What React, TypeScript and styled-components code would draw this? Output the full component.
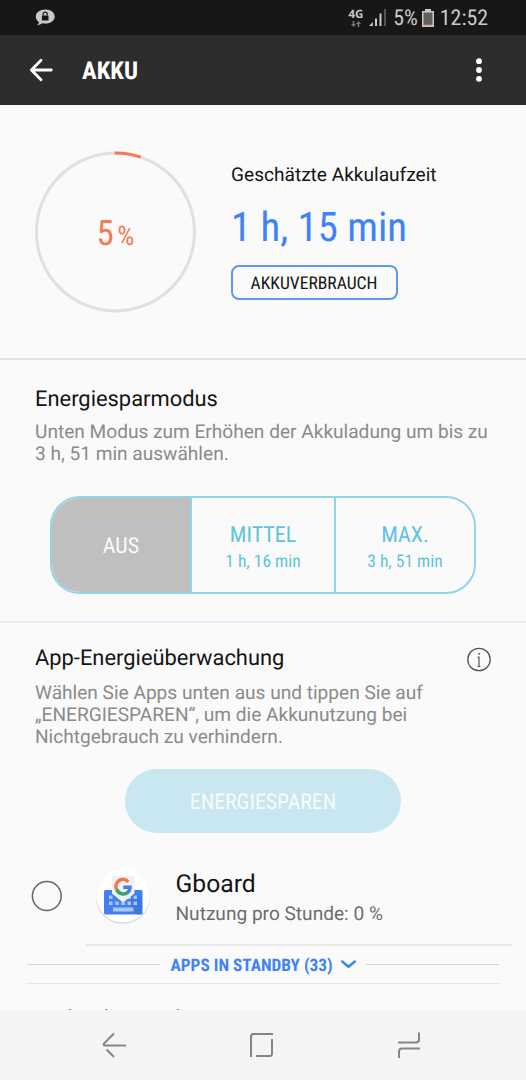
import React from "react";
import styled, { createGlobalStyle } from "styled-components";

const GlobalStyle = createGlobalStyle`
  *, *::before, *::after { box-sizing: border-box; }
  body { margin: 0; background: #fafafa; }
`;

const condensed = `
  font-family: "Roboto Condensed", Roboto, "Liberation Sans", sans-serif;
  font-stretch: 75%;
  text-rendering: geometricPrecision;
`;

const Screen = styled.div`
  width: 526px;
  height: 1080px;
  display: flex;
  flex-direction: column;
  overflow: hidden;
  background: #fafafa;
  color: #151515;
  font-family: Roboto, "Liberation Sans", sans-serif;
  text-rendering: geometricPrecision;
  white-space: nowrap;
`;

const StatusBar = styled.div`
  height: 35px;
  flex: none;
  display: flex;
  align-items: center;
  padding: 0 38px 0 35px;
  background: #171717;
  color: #c9c9c9;
`;

const StatusIcons = styled.div`
  margin-left: auto;
  display: flex;
  align-items: center;
`;

const StatusText = styled.span<{ $left: number }>`
  ${condensed}
  font-size: 21.8px;
  line-height: 35px;
  padding-top: 1px;
  margin-left: ${(p) => p.$left}px;
`;

const Network = styled.div`
  display: flex;
  flex-direction: column;
  align-items: center;
  gap: 1px;
  margin: 0 6px 0 0;
  font: 700 11.5px/11px "Open Sans", "Noto Sans", sans-serif;
`;

const BatterySlot = styled.span`
  display: flex;
  margin-left: 4px;
`;

const TitleBar = styled.header`
  height: 70px;
  flex: none;
  display: flex;
  align-items: center;
  padding: 0 43px 0 29px;
  background: #2d2d2d;
  color: #fff;
`;

const Title = styled.h1`
  ${condensed}
  margin: 4px auto 0 28px;
  font-size: 24.6px;
  line-height: 30px;
  font-weight: 700;
`;

const Content = styled.main`
  height: 905px;
  flex: none;
  overflow: hidden;
`;

const Summary = styled.section`
  height: 255px;
  display: flex;
  padding: 46px 0 0 34px;
  border-bottom: 2px solid #e2e2e2;
`;

const Gauge = styled.div`
  display: grid;
  width: 163px;
  height: 163px;
  > * { grid-area: 1 / 1; }
`;

const GaugeValue = styled.div`
  ${condensed}
  display: flex;
  align-items: baseline;
  padding: 62px 0 0 62.5px;
  gap: 3.5px;
  color: #f47a4f;
  font-size: 35px;
  line-height: 42px;
`;

const GaugeUnit = styled.span`
  font-size: 27px;
`;

const Estimate = styled.div`
  display: flex;
  flex-direction: column;
  align-items: flex-start;
  padding: 11px 0 0 34px;
`;

const EstimateLabel = styled.div`
  font-size: 19.1px;
  line-height: 25px;
`;

const EstimateTime = styled.div`
  ${condensed}
  margin-top: 15px;
  font-size: 40.8px;
  line-height: 50px;
  color: #4083f4;
`;

const UsageButton = styled.button`
  ${condensed}
  width: 167px;
  height: 35px;
  margin-top: 13px;
  padding: 2px 1px 0 0;
  border: 2px solid #5f97f5;
  border-radius: 8px;
  background: none;
  color: #151515;
  font-size: 17.6px;
`;

const ModeSection = styled.section`
  height: 263px;
  padding: 26px 35px 0;
  border-bottom: 2px solid #ebebeb;
`;

const Heading = styled.h2`
  margin: 0;
  font-size: 21.9px;
  line-height: 28px;
  font-weight: 400;
`;

const Description = styled.p<{ $top: number }>`
  margin: ${(p) => p.$top}px 0 0;
  font-size: 19.1px;
  line-height: 22px;
  color: #8b8b8b;
`;

const Segments = styled.div`
  display: flex;
  width: 426px;
  height: 98px;
  margin: 31px 0 0 15px;
  border: 2px solid #92d4e8;
  border-radius: 30px;
  overflow: hidden;
`;

const Segment = styled.button<{ $width: number; $active?: boolean }>`
  ${condensed}
  width: ${(p) => p.$width}px;
  flex: none;
  display: flex;
  flex-direction: column;
  align-items: center;
  justify-content: center;
  padding: ${(p) => (p.$active ? 4 : 6)}px 0 0;
  border: 0;
  background: ${(p) => (p.$active ? "#bfbfbf" : "transparent")};
  color: ${(p) => (p.$active ? "#fafafa" : "#5fc3e0")};
  & + & { border-left: 2px solid #92d4e8; }
`;

const SegmentName = styled.span`
  font-size: 22px;
  line-height: 28px;
`;

const SegmentTime = styled.span`
  font-size: 17.5px;
  line-height: 25px;
`;

const MonitorSection = styled.section`
  padding: 21px 35px 0;
`;

const HeadingRow = styled.div`
  display: flex;
  justify-content: space-between;
  height: 29px;
  > h2 { padding-top: 1px; }
`;

const SaveButton = styled.button`
  ${condensed}
  display: block;
  width: 276px;
  height: 64px;
  margin: 21px auto 0;
  padding: 2px 0 0;
  border: 0;
  border-radius: 32px;
  background: #c9e7f0;
  color: #fafafa;
  font-size: 21.8px;
`;

const AppRow = styled.div`
  display: flex;
  height: 111px;
  margin-left: 31px;
  padding-top: 31px;
`;

const IconSlot = styled.div`
  padding: 4px 0 0 32px;
`;

const AppText = styled.div`
  padding: 6px 0 0 24.5px;
`;

const AppName = styled.div`
  font-size: 24.7px;
  line-height: 29px;
`;

const AppUsage = styled.div`
  margin-top: 2px;
  font-size: 19.1px;
  line-height: 26px;
  color: #6d6d6d;
`;

const Rule = styled.div<{ $left: number; $right: number; $thick: number }>`
  height: ${(p) => p.$thick}px;
  margin: 0 ${(p) => p.$right}px 0 ${(p) => p.$left}px;
  background: #e8e8e8;
`;

const StandbyRow = styled.div`
  ${condensed}
  display: flex;
  align-items: center;
  height: 37px;
  padding: 0 27px;
  color: #4083f4;
  font-size: 17.3px;
  font-weight: 700;
`;

const StandbyLine = styled.span`
  flex: 1;
  height: 1px;
  background: #d6d6d6;
`;

const StandbyLabel = styled.span`
  display: flex;
  align-items: center;
  gap: 8px;
  padding: 0 10px;
`;

const StandbyText = styled.span`
  padding-top: 2px;
`;

const NextHeading = styled(Heading)`
  padding: 22px 0 0 35px;
`;

const NavBar = styled.nav`
  height: 70px;
  flex: none;
  display: flex;
  align-items: center;
  justify-content: space-between;
  padding: 0 104px 0 99px;
  background: #f4f4f4;
`;

const ChatLockIcon = () => (
  <svg width="20" height="17" viewBox="0 0 20 17">
    <path d="M10.4.5C5 .5.8 3.400.8 7.400c0 2.300 1.200 4.300 3.200 5.500-.2 1.300-1 2.300-1.900 3.200 2 0 3.700-.7 5-1.800 1 .2 2.100.3 3.300.3 5.200 0 9.300-2.900 9.300-7.100S15.600.5 10.400.5z" fill="#c9c9c9" />
    <rect x="6.900" y="6.500" width="6.600" height="5" rx=".5" fill="#171717" />
    <path d="M8.200 6.500V5.100a2 2 0 0 1 4 0v1.400" fill="none" stroke="#171717" strokeWidth="1.200" />
  </svg>
);

const SignalIcon = () => (
  <svg width="17" height="17" viewBox="0 0 17 17">
    <path d="M0 17L3.800 13V17z" fill="#c9c9c9" />
    <path d="M7 17V9.500M11.500 17V4.500" stroke="#c9c9c9" strokeWidth="2" />
    <path d="M16 17V0" stroke="#555" strokeWidth="2" />
  </svg>
);

const BatteryIcon = () => (
  <svg width="12" height="18" viewBox="0 0 12 18">
    <path d="M3 0h6v2h3v16H0V2h3z" fill="#c9c9c9" />
    <path d="M1.500 3.500h9v12.500h-9z" fill="#606060" />
    <path d="M1.500 15.500h9v1h-9z" fill="#b98b80" />
  </svg>
);

const GboardIcon = () => (
  <svg width="56" height="57" viewBox="0 0 56 57">
    <circle cx="28" cy="28.500" r="27.200" fill="#d5d5d5" />
    <circle cx="28" cy="27.500" r="27" fill="#fff" />
    <rect x="9" y="22" width="38.500" height="24.500" rx="1.500" fill="#4380ed" />
    <path d="M35.500 40l6.500 6.500H47V32L37 22z" fill="#346fd4" opacity=".5" />
    <path
      d="M14 27.500h3.500V31H14zM32.500 27.500H36V31h-3.500zM38.500 27.500H42V31h-3.500zM14 33.500h3.500V37H14zM20.200 33.500h3.500V37h-3.500zM26.400 33.500h3.500V37h-3.500zM32.500 33.500H36V37h-3.500zM38.500 33.500H42V37h-3.500zM18 39.500h20.500v4H18z"
      fill="#a9c5fa"
    />
    <path d="M18.500 8h19a2 2 0 0 1 2 2v15.500l-11.500 9-11-9V10q0-2 1.500-2z" fill="#f1f1f1" />
    <g fill="none" strokeWidth="3.500">
      <path d="M33.300 14A7 7 0 0 0 21.600 21.500" stroke="#f17550" />
      <path d="M21.800 21.500A7 7 0 0 0 33 24.200" stroke="#36a568" />
      <path d="M28.300 19.200H35A7 7 0 0 1 32.300 24.700" stroke="#4380ed" />
    </g>
  </svg>
);

export default function App() {
  return (
    <Screen>
      <GlobalStyle />
      <StatusBar>
        <ChatLockIcon />
        <StatusIcons>
          <Network>
            4G
            <svg width="10" height="6" viewBox="0 0 10 6">
              <path d="M2.500 0v3M7.500 6V3" stroke="#777" strokeWidth="1.600" />
              <path d="M0 3h5L2.500 6zM5 3h5L7.500 0z" fill="#777" />
            </svg>
          </Network>
          <SignalIcon />
          <StatusText $left={7}>5%</StatusText>
          <BatterySlot>
            <BatteryIcon />
          </BatterySlot>
          <StatusText $left={6}>12:52</StatusText>
        </StatusIcons>
      </StatusBar>
      <TitleBar>
        <svg width="25" height="24" viewBox="0 0 25 24" fill="none" stroke="#fff" strokeWidth="2.800" strokeLinecap="round" strokeLinejoin="round">
          <path d="M12 2.300L2.400 12l9.600 9.700M3 12h19.300" />
        </svg>
        <Title>AKKU</Title>
        <svg width="8" height="26" viewBox="0 0 8 26" fill="#fff">
          <circle cx="4" cy="4.200" r="2.900" />
          <circle cx="4" cy="13" r="2.900" />
          <circle cx="4" cy="21.800" r="2.900" />
        </svg>
      </TitleBar>
      <Content>
        <Summary>
          <Gauge>
            <svg width="163" height="163" viewBox="0 0 163 163" fill="none" strokeWidth="3">
              <circle cx="81.500" cy="81" r="79" stroke="#e0e0e0" />
              <path d="M80.500 2A79 79 0 0 1 106.800 6.200" stroke="#f47a4f" />
            </svg>
            <GaugeValue>
              5<GaugeUnit>%</GaugeUnit>
            </GaugeValue>
          </Gauge>
          <Estimate>
            <EstimateLabel>Geschätzte Akkulaufzeit</EstimateLabel>
            <EstimateTime>1 h, 15 min</EstimateTime>
            <UsageButton>AKKUVERBRAUCH</UsageButton>
          </Estimate>
        </Summary>
        <ModeSection>
          <Heading>Energiesparmodus</Heading>
          <Description $top={7}>
            Unten Modus zum Erhöhen der Akkuladung um bis zu
            <br />3 h, 51 min auswählen.
          </Description>
          <Segments>
            <Segment $width={138} $active>
              <SegmentName>AUS</SegmentName>
            </Segment>
            <Segment $width={144}>
              <SegmentName>MITTEL</SegmentName>
              <SegmentTime>1 h, 16 min</SegmentTime>
            </Segment>
            <Segment $width={140}>
              <SegmentName>MAX.</SegmentName>
              <SegmentTime>3 h, 51 min</SegmentTime>
            </Segment>
          </Segments>
        </ModeSection>
        <MonitorSection>
          <HeadingRow>
            <Heading>App-Energieüberwachung</Heading>
            <svg width="24" height="31" viewBox="0 0 24 31" fill="none" stroke="#555" strokeWidth="1.300">
              <circle cx="12" cy="15.500" r="11.200" />
              <path d="M10.600 13.200H12V22.500M10.600 22.500h2.800" strokeWidth="1.200" />
              <circle cx="12" cy="9.800" r=".7" fill="#555" strokeWidth=".6" />
            </svg>
          </HeadingRow>
          <Description $top={9}>
            Wählen Sie Apps unten aus und tippen Sie auf
            <br />„ENERGIESPAREN“, um die Akkunutzung bei
            <br />Nichtgebrauch zu verhindern.
          </Description>
          <SaveButton>ENERGIESPAREN</SaveButton>
        </MonitorSection>
        <AppRow>
          <svg width="32" height="63" viewBox="0 0 32 63" fill="none">
            <circle cx="15.800" cy="32" r="14.400" stroke="#666" strokeWidth="1.500" />
          </svg>
          <IconSlot>
            <GboardIcon />
          </IconSlot>
          <AppText>
            <AppName>Gboard</AppName>
            <AppUsage>Nutzung pro Stunde: 0 %</AppUsage>
          </AppText>
        </AppRow>
        <Rule $left={85} $right={14} $thick={2} />
        <StandbyRow>
          <StandbyLine />
          <StandbyLabel>
            <StandbyText>APPS IN STANDBY (33)</StandbyText>
            <svg width="15" height="9" viewBox="0 0 15 9" fill="none" stroke="#4083f4" strokeWidth="2.400">
              <path d="M1.200 1.500l6.300 5.200L13.800 1.500" strokeLinecap="round" strokeLinejoin="round" />
            </svg>
          </StandbyLabel>
          <StandbyLine />
        </StandbyRow>
        <Rule $left={26} $right={26} $thick={1} />
        <NextHeading>Nicht überwachte Apps</NextHeading>
      </Content>
      <NavBar>
        <svg width="28" height="28" viewBox="0 0 28 28" fill="none" stroke="#858585" strokeWidth="2">
          <path d="M15 2.500L5 12.500Q4 14.500 6 14.500H27M7.500 18.500l7.500 7.500" />
        </svg>
        <svg width="26" height="26" viewBox="0 0 26 26" fill="none" stroke="#858585" strokeWidth="2">
          <path d="M2 25V4.500Q2 2 4.500 2H24M7 24h13.500q2.500 0 2.500-2.500V7" />
        </svg>
        <svg width="26" height="28" viewBox="0 0 26 28" fill="none" stroke="#858585" strokeWidth="2">
          <path d="M2 11.500h18q3 0 3-3V1.500M3 27v-6.500q0-3 3-3h18" />
        </svg>
      </NavBar>
    </Screen>
  );
}
